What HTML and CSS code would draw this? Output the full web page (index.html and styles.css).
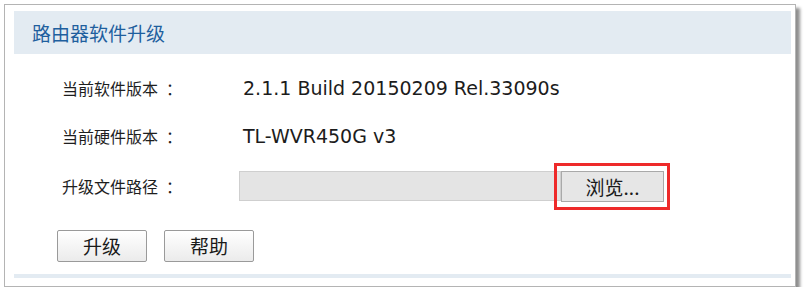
FILE: index.html
```html
<!DOCTYPE html>
<html lang="zh-CN">
<head>
<meta charset="utf-8">
<title>路由器软件升级</title>
<link rel="stylesheet" href="styles.css">
</head>
<body>
<div class="frame">
  <div class="header">路由器软件升级</div>
  <div class="content">
    <div class="row">
      <div class="label">当前软件版本<span class="colon">：</span></div>
      <div class="value">2.1.1 Build 20150209 Rel.33090s</div>
    </div>
    <div class="row">
      <div class="label">当前硬件版本<span class="colon">：</span></div>
      <div class="value">TL-WVR450G v3</div>
    </div>
    <div class="row row-file">
      <div class="label">升级文件路径<span class="colon">：</span></div>
      <div class="file">
        <div class="file-path"></div>
        <div class="browse-wrap">
          <button class="browse">浏览...</button>
        </div>
      </div>
    </div>
    <div class="actions">
      <button class="btn">升级</button>
      <button class="btn">帮助</button>
    </div>
  </div>
  <div class="footer-band"></div>
</div>
</body>
</html>
```

FILE: styles.css
```css
* { box-sizing: border-box; }

html, body {
  margin: 0;
  padding: 0;
  background: #ffffff;
}

body {
  padding: 4px 0 0 4px;
  font-family: "Noto Sans CJK SC", "Noto Sans", sans-serif;
  color: #222;
}

.frame {
  width: 792px;
  height: 283px;
  border: 1px solid #b4b4b4;
  background: #fff;
  box-shadow: 4px 4px 3px #8f8f8f;
  padding: 6px 4px 9px 9px;
  display: flex;
  flex-direction: column;
}

.header {
  height: 43px;
  background: #e3ebf2;
  color: #1f5f9e;
  font-size: 19px;
  line-height: 43px;
  padding-left: 18px;
  flex: none;
}

.content {
  flex: 1;
  padding: 10px 0 0 48px;
  display: flex;
  flex-direction: column;
}

.row {
  display: flex;
  align-items: center;
  height: 48px;
  flex: none;
}

.row-file {
  height: 52px;
}

.label {
  width: 181px;
  font-size: 16px;
  color: #1e1e1e;
  flex: none;
}

.colon {
  margin-left: 8px;
}

.value {
  font-family: "DejaVu Sans", Verdana, sans-serif;
  font-size: 19px;
  color: #1c1c1c;
}

.file {
  display: flex;
  align-items: center;
  margin-left: -4px;
}

.file-path {
  width: 322px;
  height: 30px;
  background: #e4e4e4;
  border: 1px solid #cfcfcf;
}

.browse-wrap {
  position: relative;
}

.browse-wrap::after {
  content: "";
  position: absolute;
  left: -7px;
  right: -6px;
  top: -8px;
  bottom: -8px;
  border: 3px solid #ee2a2a;
  pointer-events: none;
}

.browse {
  display: block;
  width: 103px;
  height: 31px;
  margin: 0;
  padding: 0;
  background: #e6e6e6;
  border: 1px solid #a9a9a9;
  font-family: "Noto Sans CJK SC", sans-serif;
  font-size: 19px;
  line-height: 29px;
  color: #1a1a1a;
}

.actions {
  display: flex;
  gap: 17px;
  margin-top: 18px;
  margin-left: -5px;
}

.btn {
  width: 90px;
  height: 32px;
  margin: 0;
  padding: 0;
  border: 1px solid #9a9a9a;
  border-radius: 2px;
  background: linear-gradient(#ffffff, #ebebeb);
  font-family: "Noto Sans CJK SC", sans-serif;
  font-size: 19px;
  line-height: 30px;
  color: #1a1a1a;
}

.footer-band {
  height: 4px;
  background: #e3ebf2;
  flex: none;
  margin-bottom: -1px;
}
```
